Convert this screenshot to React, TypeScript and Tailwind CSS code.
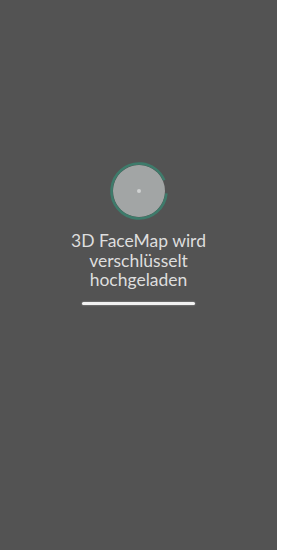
import React from 'react';

const ProgressRing = () => {
  // arc from 0° (3 o'clock) clockwise almost full turn, leaving a gap on the upper right
  const r = 27.5;
  const c = 2 * Math.PI * r;
  const visible = c * 0.92;
  return (
    <svg width="60" height="60" viewBox="0 0 60 60">
      <circle cx="30" cy="30" r="26" fill="#a2a5a5" />
      <circle
        cx="30"
        cy="30"
        r={r}
        fill="none"
        stroke="#3e7b6b"
        strokeWidth="2.6"
        strokeDasharray={`${visible} ${c}`}
        transform="rotate(5 30 30)"
      />
      <circle cx="30" cy="30" r="2" fill="#cfd1d1" />
    </svg>
  );
};

export default function App() {
  return (
    <div className="flex h-[550px] w-[281px] bg-white">
      <div className="flex h-full w-[277px] flex-col items-center bg-[#535353] pt-[161px]">
        <ProgressRing />
        <p
          className="mt-[10px] text-center text-[17.5px] leading-[19.5px] text-[#dedede]"
          style={{ fontFamily: 'Lato, "Open Sans", sans-serif' }}
        >
          3D FaceMap wird
          <br />
          verschlüsselt
          <br />
          hochgeladen
        </p>
        <div className="mt-[12px] h-[3px] w-[113px] rounded-full bg-[#f2f2f2] shadow-[0_0_2px_rgba(255,255,255,0.5)]" />
      </div>
    </div>
  );
}
